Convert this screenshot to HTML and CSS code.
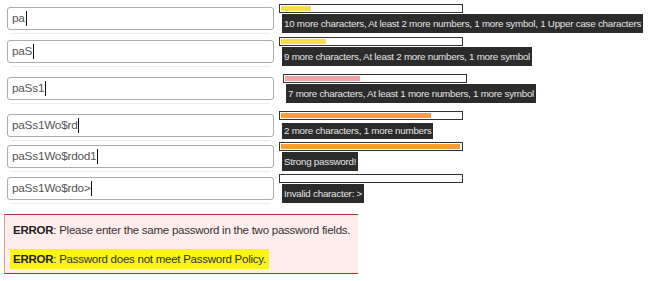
FILE: index.html
```html
<!DOCTYPE HTML>
<html>
<head>
  <title>Password Policy Meter</title>
  <meta charset="UTF-8">
  <link rel="stylesheet" href="styles.css">
</head>
<body>
  <div id="demo">
    <div class="row">
      <div class="field">pa<span class="caret"></span></div>
      <div class="meter">
        <div class="bar"><div class="fill weak" style="width: 30px"></div></div>
        <div class="hint">10 more characters, At least 2 more numbers, 1 more symbol, 1 Upper case characters</div>
      </div>
    </div>

    <div class="row">
      <div class="field">paS<span class="caret"></span></div>
      <div class="meter">
        <div class="bar"><div class="fill weak" style="width: 45px"></div></div>
        <div class="hint">9 more characters, At least 2 more numbers, 1 more symbol</div>
      </div>
    </div>

    <div class="row loose">
      <div class="field">paSs1<span class="caret"></span></div>
      <div class="meter shift">
        <div class="bar"><div class="fill bad" style="width: 75px"></div></div>
        <div class="hint">7 more characters, At least 1 more numbers, 1 more symbol</div>
      </div>
    </div>

    <div class="row loose">
      <div class="field">paSs1Wo$rd<span class="caret"></span></div>
      <div class="meter">
        <div class="bar"><div class="fill good" style="width: 150px"></div></div>
        <div class="hint short">2 more characters, 1 more numbers</div>
      </div>
    </div>

    <div class="row tight">
      <div class="field">paSs1Wo$rdod1<span class="caret"></span></div>
      <div class="meter">
        <div class="bar"><div class="fill good" style="width: 179px"></div></div>
        <div class="hint">Strong password!</div>
      </div>
    </div>

    <div class="row tight">
      <div class="field">paSs1Wo$rdo&gt;<span class="caret"></span></div>
      <div class="meter">
        <div class="bar"></div>
        <div class="hint">Invalid character: &gt;</div>
      </div>
    </div>

    <div class="error">
      <p><strong>ERROR</strong>: Please enter the same password in the two password fields.</p>
      <p><span class="mark"><strong>ERROR</strong>: Password does not meet Password Policy.</span></p>
    </div>
  </div>
</body>
</html>
```

FILE: styles.css
```css
* {
  box-sizing: border-box;
}

html,
body{
  margin: 0;
  background: white;
  font-family: "Liberation Sans", arial, sans-serif;
}

#demo{
  padding: 4px 0 0 7px;
}

.row{
  display: flex;
  align-items: flex-start;
}

.row + .row{
  margin-top: 4px;
}

.row.loose{
  margin-top: 8px;
}

.row.tight{
  margin-top: 3px;
}

.field{
  position: relative;
  flex: none;
  width: 267px;
  height: 23px;
  margin-top: 3px;
  padding: 0 4px;
  border: 1px solid #ababab;
  border-radius: 3px;
  color: #555;
  font-size: 11.8px;
  letter-spacing: -0.25px;
  line-height: 21px;
  display: flex;
  align-items: center;
}

/* faint rule under each field */
.field:after{
  content: "";
  position: absolute;
  left: 3px;
  right: 3px;
  bottom: -5px;
  height: 1px;
  background: #ececec;
}

.caret{
  display: inline-block;
  width: 1px;
  height: 15px;
  margin-left: 1px;
  background: #111;
}

.meter{
  flex: none;
  margin-left: 5px;
}

.meter.shift{
  margin-left: 9px;
}

.bar{
  width: 184px;
  height: 9px;
  padding: 1px;
  border: 1px solid #333;
  background: white;
}

.fill{
  height: 5px;
}

.fill.weak{
  background: #f7dc4c;
}

.fill.bad{
  background: #f2a1a6;
}

.fill.good{
  background: #f79d35;
}

.hint{
  display: inline-block;
  margin: 1px 0 0 3px;
  padding: 0 2px;
  background: #2b2b2b;
  color: #e4e4e4;
  font-size: 9.8px;
  letter-spacing: -0.25px;
  line-height: 19px;
  white-space: nowrap;
}

.hint.short{
  line-height: 16px;
}

.error{
  width: 354px;
  margin: 11px 0 0 -3px;
  padding: 5px 0 4px 8px;
  background: #ffeded;
  border-top: 1px solid #a33;
  border-bottom: 1px solid #a33;
  border-left: 1px solid #d9a0a0;
  color: #333;
  font-size: 11.5px;
  letter-spacing: -0.25px;
}

.error p{
  margin: 0;
  line-height: 20px;
  white-space: nowrap;
}

.error p + p{
  margin-top: 9px;
}

.error strong{
  font-weight: bold;
  color: #222;
}

.mark{
  background: #f9f31a;
  padding: 4px 3px 4px 3px;
  margin-left: -3px;
}
```
